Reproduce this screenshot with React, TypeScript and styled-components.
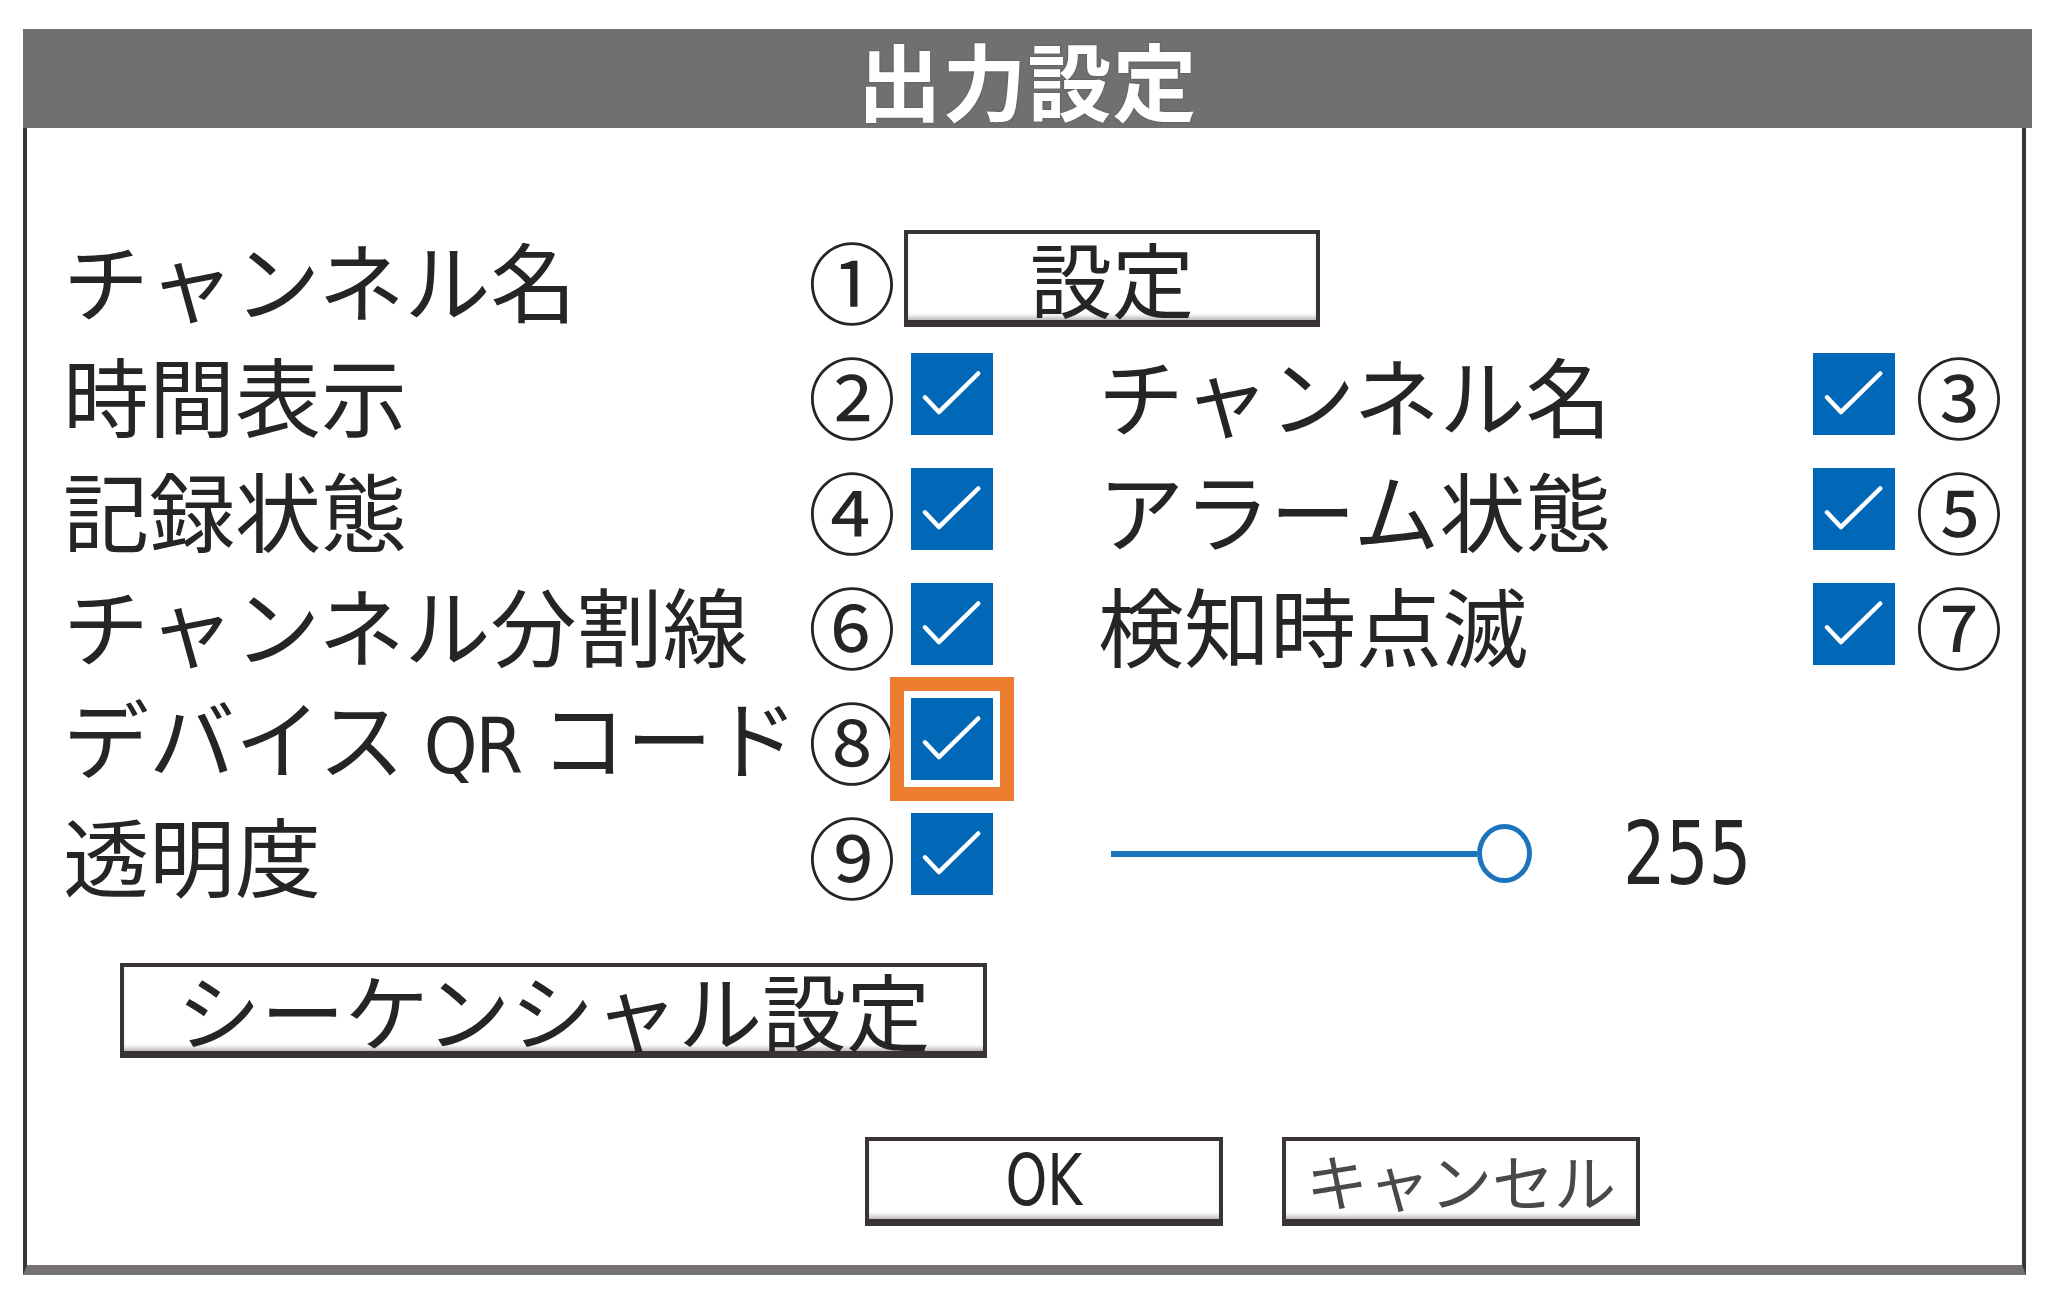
import React from "react";
import styled, { createGlobalStyle, css } from "styled-components";

const GlobalStyle = createGlobalStyle`
  html, body { margin: 0; padding: 0; background: #ffffff; }
  body {
    font-family: "Noto Sans CJK JP", "Noto Sans", sans-serif;
    color: #262424;
  }
  * { box-sizing: border-box; }
`;

const narrow = `"Liberation Sans Narrow", "DejaVu Sans Condensed", "Roboto Condensed", Roboto, sans-serif`;

const Page = styled.div`
  width: 2049px;
  height: 1316px;
  padding: 29px 0 0 23px;
  display: flex;
  flex-direction: column;
  align-items: flex-start;
`;

const TitleBar = styled.div`
  width: 2009px;
  height: 99px;
  background: #707070;
  display: flex;
  align-items: center;
  justify-content: center;
`;

const Title = styled.h1`
  margin: 0;
  font-size: 84px;
  line-height: 1;
  font-weight: 700;
  color: #ffffff;
  letter-spacing: 1px;
  text-shadow: 0 0 2px rgba(0, 0, 0, 0.35);
`;

const Body = styled.div`
  width: 2003px;
  background: #ffffff;
  border-left: 4px solid #3a3636;
  border-right: 4px solid #3a3636;
  border-bottom: 10px solid #777272;
  padding: 93px 0 39px 36px;
  display: flex;
  flex-direction: column;
  align-items: flex-start;
`;

const Row = styled.div`
  display: flex;
  align-items: center;
  height: 115px;
`;

const Label = styled.span<{ $right?: boolean }>`
  flex: none;
  width: ${(p) => (p.$right ? "715px" : "745px")};
  margin-left: ${(p) => (p.$right ? "105px" : "0")};
  font-size: 86px;
  line-height: 1;
  white-space: nowrap;
`;

const Latin = styled.span`
  font-family: ${narrow};
  font-size: 76px;
  line-height: 1;
  letter-spacing: -2px;
`;

const Condensed = styled.span<{ $scale: number }>`
  display: inline-block;
  transform: scaleX(${(p) => p.$scale});
  transform-origin: center;
`;

const Num = styled.span<{ $gap?: boolean }>`
  flex: none;
  width: 82px;
  margin-left: ${(p) => (p.$gap ? "20px" : "0")};
  font-size: 88px;
  line-height: 1;
  text-align: center;
`;

const Check = styled.span<{ $highlight?: boolean; $first?: boolean }>`
  flex: none;
  width: 82px;
  height: 82px;
  margin-left: ${(p) => (p.$first ? "21px" : "0")};
  background: #0068b7;
  display: flex;
  align-items: center;
  justify-content: center;
  ${(p) =>
    p.$highlight &&
    css`
      box-shadow: 0 0 0 7px #ffffff, 0 0 0 21px #ed7d31;
    `}
`;

const ButtonBase = styled.button`
  flex: none;
  margin: 0;
  padding: 0;
  background: #ffffff;
  color: #262424;
  font-family: "Noto Sans CJK JP", "Noto Sans", sans-serif;
  line-height: 1;
  border: 4px solid #3a3434;
  border-bottom-width: 7px;
  box-shadow: inset 0 -5px 4px -2px rgba(0, 0, 0, 0.28);
  display: flex;
  align-items: center;
  justify-content: center;
  cursor: pointer;
`;

const SetButton = styled(ButtonBase)`
  margin-left: 14px;
  width: 416px;
  height: 97px;
  font-size: 82px;
`;

const SeqButton = styled(ButtonBase)`
  margin: 52px 0 0 57px;
  width: 867px;
  height: 95px;
  font-size: 84px;
`;

const Footer = styled.div`
  display: flex;
  gap: 59px;
  margin-top: 79px;
  padding-left: 802px;
`;

const DlgButton = styled(ButtonBase)<{ $latin?: boolean }>`
  width: 358px;
  height: 89px;
  font-size: ${(p) => (p.$latin ? "72px" : "62px")};
  font-family: ${(p) => (p.$latin ? narrow : `"Noto Sans CJK JP", sans-serif`)};
  color: ${(p) => (p.$latin ? "#262424" : "#4a4848")};
`;

const Slider = styled.div`
  display: flex;
  align-items: center;
  margin-left: 118px;
`;

const Track = styled.span`
  width: 366px;
  height: 6px;
  background: #1c75bc;
`;

const Thumb = styled.span`
  width: 55px;
  height: 59px;
  border: 5px solid #1c75bc;
  border-radius: 50%;
  background: #ffffff;
`;

const Value = styled.span`
  margin-left: 91px;
  font-family: ${narrow};
  font-size: 88px;
  line-height: 1;
  display: inline-block;
  transform: scaleX(0.85);
  transform-origin: left center;
`;

const CheckMark = () => (
  <svg width="82" height="82" viewBox="0 0 100 100" aria-hidden>
    <polyline
      points="17,54 34,72 82,25"
      fill="none"
      stroke="#ffffff"
      strokeWidth="5.5"
      strokeLinecap="round"
      strokeLinejoin="round"
    />
  </svg>
);

type Pair = { left: string; ln: string; right?: string; rn?: string };

const pairs: Pair[] = [
  { left: "時間表示", ln: "②", right: "チャンネル名", rn: "③" },
  { left: "記録状態", ln: "④", right: "アラーム状態", rn: "⑤" },
  { left: "チャンネル分割線", ln: "⑥", right: "検知時点滅", rn: "⑦" },
];

export default function App() {
  return (
    <>
      <GlobalStyle />
      <Page>
        <TitleBar>
          <Title>出力設定</Title>
        </TitleBar>
        <Body>
          <Row>
            <Label>チャンネル名</Label>
            <Num>①</Num>
            <SetButton>設定</SetButton>
          </Row>
          {pairs.map((p) => (
            <Row key={p.ln}>
              <Label>{p.left}</Label>
              <Num>{p.ln}</Num>
              <Check $first>
                <CheckMark />
              </Check>
              <Label $right>{p.right}</Label>
              <Check>
                <CheckMark />
              </Check>
              <Num $gap>{p.rn}</Num>
            </Row>
          ))}
          <Row>
            <Label>
              デバイス <Latin>QR</Latin> コード
            </Label>
            <Num>⑧</Num>
            <Check $first $highlight>
              <CheckMark />
            </Check>
          </Row>
          <Row>
            <Label>透明度</Label>
            <Num>⑨</Num>
            <Check $first>
              <CheckMark />
            </Check>
            <Slider>
              <Track />
              <Thumb />
            </Slider>
            <Value>255</Value>
          </Row>
          <SeqButton>シーケンシャル設定</SeqButton>
          <Footer>
            <DlgButton $latin>
              <Condensed $scale={0.82}>OK</Condensed>
            </DlgButton>
            <DlgButton>キャンセル</DlgButton>
          </Footer>
        </Body>
      </Page>
    </>
  );
}
